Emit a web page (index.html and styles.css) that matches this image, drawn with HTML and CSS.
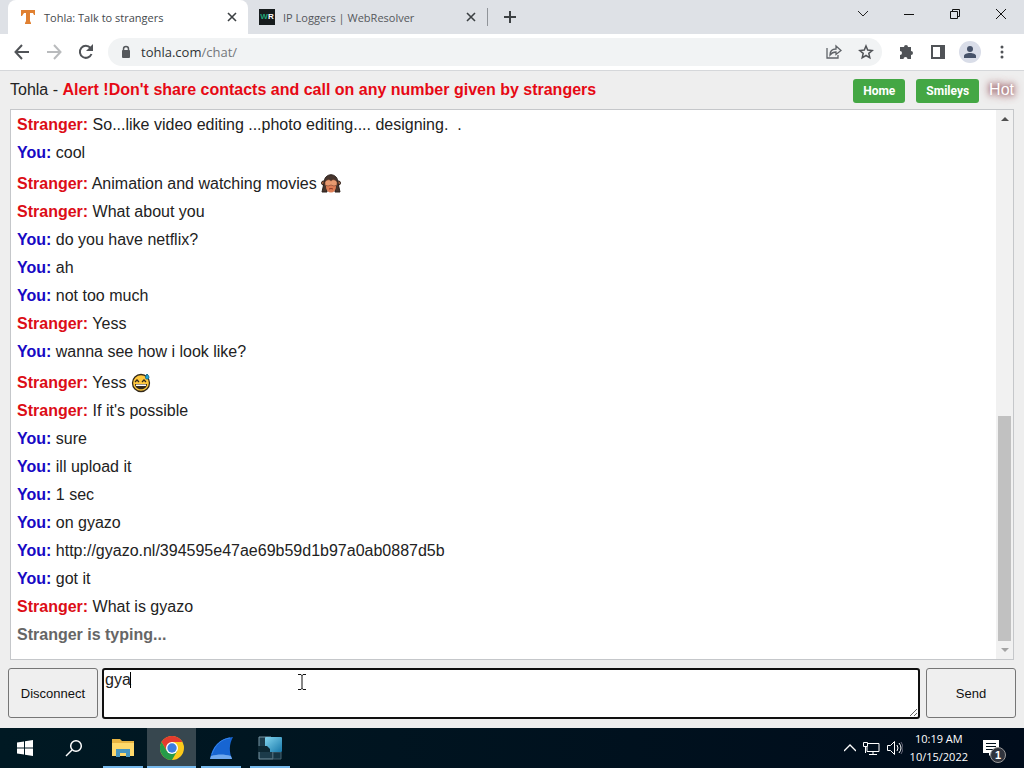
FILE: index.html
```html
<!DOCTYPE html>
<html lang="en">
<head>
    <meta charset="UTF-8">
    <meta name="viewport" content="width=device-width, initial-scale=1.0">
    <title>Tohla: Talk to strangers</title>
    <link rel="stylesheet" href="styles.css">
</head>
<body>
    <header class="tabs">
        <div class="tab active">
            <svg width="16" height="16" viewBox="0 0 16 16"><path d="M1 1h14v5h-1l-1-2h-3v8l1 2v1H5v-1l1-2V4H4L2 7H1z" fill="#e08031"/></svg>
            <span>Tohla: Talk to strangers</span>
            <button class="plain" aria-label="Close tab"><svg width="10" height="10" viewBox="0 0 10 10"><path d="M1 1l8 8M9 1L1 9" stroke="#3c4043" stroke-width="1.600"/></svg></button>
        </div>
        <div class="tab">
            <b class="wr"><i>W</i>R</b>
            <span>IP Loggers | WebResolver</span>
            <button class="plain" aria-label="Close tab"><svg width="10" height="10" viewBox="0 0 10 10"><path d="M1 1l8 8M9 1L1 9" stroke="#3c4043" stroke-width="1.600"/></svg></button>
        </div>
        <button class="plain new-tab" aria-label="New tab"><svg width="12" height="12" viewBox="0 0 12 12"><path d="M6 0v12M0 6h12" stroke="#3c4043" stroke-width="2"/></svg></button>
        <div class="window-buttons">
            <button class="plain" aria-label="Search tabs"><svg width="12" height="12" viewBox="0 0 12 12"><path d="M1 3l5 5 5-5" fill="none" stroke="#222"/></svg></button>
            <button class="plain" aria-label="Minimize"><svg width="12" height="12" viewBox="0 0 12 12"><path d="M1 6.500h10" stroke="#111"/></svg></button>
            <button class="plain" aria-label="Restore"><svg width="12" height="12" viewBox="0 0 12 12"><path d="M1.500 3.500h7v7h-7zM3.500 3V1.500h7v7H9" fill="none" stroke="#111"/></svg></button>
            <button class="plain" aria-label="Close"><svg width="12" height="12" viewBox="0 0 12 12"><path d="M1 1l10 10M11 1L1 11" stroke="#111"/></svg></button>
        </div>
    </header>

    <nav class="toolbar">
        <button class="plain" aria-label="Back"><svg width="16" height="16" viewBox="0 0 16 16"><path d="M15 8H2M8 1L1.500 8 8 15" fill="none" stroke="#505357" stroke-width="2"/></svg></button>
        <button class="plain" aria-label="Forward"><svg width="16" height="16" viewBox="0 0 16 16"><path d="M1 8h13M8 1l6.500 7L8 15" fill="none" stroke="#b9bbbd" stroke-width="2"/></svg></button>
        <button class="plain" aria-label="Reload"><svg width="16" height="16" viewBox="0 0 16 16"><path d="M13.500 10A6 6 0 1 1 12.500 4" fill="none" stroke="#505357" stroke-width="2"/><path d="M15 0v7H8z" fill="#505357"/></svg></button>
        <div class="address">
            <svg width="10" height="14" viewBox="0 0 10 14"><path d="M2.500 6V4a2.500 2.500 0 0 1 5 0v2" fill="none" stroke="#55585c" stroke-width="1.500"/><rect x="1" y="5" width="8" height="8" rx="1" fill="#55585c"/></svg>
            <span class="url">tohla.com<i>/chat/</i></span>
            <button class="plain" aria-label="Share"><svg width="16" height="16" viewBox="0 0 16 16"><path d="M1 4v10h11v-3M4 11c0-4 2-6 6-6V2l5 4.500-5 4V8C7 8 5.500 9 4 11z" fill="none" stroke="#5f6368" stroke-width="1.300"/></svg></button>
            <button class="plain" aria-label="Bookmark"><svg width="16" height="16" viewBox="0 0 16 16"><path d="M8 2l1.700 4.100 4.500.400-3.400 2.900 1 4.400L8 11.500l-3.800 2.300 1-4.400-3.400-2.900 4.500-.4z" fill="none" stroke="#505357" stroke-width="1.500"/></svg></button>
        </div>
        <div class="tools">
            <button class="plain" aria-label="Extensions"><svg width="16" height="16" viewBox="0 0 16 16"><path d="M2 3h4a2 2 0 0 1 4 0h3v4a2 2 0 0 1 0 4v4H9.500a2 2 0 0 0-4 0H2v-4a2 2 0 0 0 0-4z" fill="#505357"/></svg></button>
            <button class="plain" aria-label="Side panel"><svg width="16" height="16" viewBox="0 0 16 16"><path d="M2 2h12v12H2z" fill="none" stroke="#505357" stroke-width="2"/><path d="M10 2h4v12h-4z" fill="#505357"/></svg></button>
            <button class="plain" aria-label="Profile"><svg width="22" height="22" viewBox="0 0 22 22"><circle cx="11" cy="11" r="11" fill="#d9dde8"/><circle cx="11" cy="8" r="3" fill="#465269"/><path d="M5 17v-2c0-4 12-4 12 0v2z" fill="#465269"/></svg></button>
            <button class="plain" aria-label="Menu"><svg width="16" height="16" viewBox="0 0 16 16"><g fill="#505357"><circle cx="8" cy="3" r="1.500"/><circle cx="8" cy="8" r="1.500"/><circle cx="8" cy="13" r="1.500"/></g></svg></button>
        </div>
    </nav>

    <main>
        <div class="top">
            <div class="title">Tohla - <strong>Alert !Don't share contacts and call on any number given by strangers</strong></div>
            <a class="btn" href="#">Home</a>
            <a class="btn" href="#">Smileys</a>
            <a class="hot" href="#">Hot</a>
        </div>

        <section class="chat">
            <ul>
                <li><b class="stranger">Stranger:</b> So...like video editing ...photo editing.... designing.&nbsp; .</li>
                <li><b class="you">You:</b> cool</li>
                <li class="smiley"><b class="stranger">Stranger:</b> Animation and watching movies
                    <svg width="20" height="20" viewBox="0 0 20 20"><circle cx="2.500" cy="9" r="2" fill="#b06c48" stroke="#30211b"/><circle cx="17.500" cy="9" r="2" fill="#b06c48" stroke="#30211b"/><path d="M3 9C3-2 17-2 17 9l2 9h-5v-3H6v3H1z" fill="#46352d" stroke="#2b211d"/><ellipse cx="10" cy="13" rx="5" ry="5.500" fill="#de7d55"/><path d="M4 8q3-4 6-1q3-3 6 1v3q-3 2-6 0q-3 2-6 0z" fill="#e89a70" stroke="#7b4430" stroke-width=".6"/><path d="M8 15q2-1 4 0" stroke="#8f3925" fill="none"/></svg></li>
                <li><b class="stranger">Stranger:</b> What about you</li>
                <li><b class="you">You:</b> do you have netflix?</li>
                <li><b class="you">You:</b> ah</li>
                <li><b class="you">You:</b> not too much</li>
                <li><b class="stranger">Stranger:</b> Yess</li>
                <li><b class="you">You:</b> wanna see how i look like?</li>
                <li class="smiley"><b class="stranger">Stranger:</b> Yess
                    <svg width="20" height="20" viewBox="0 0 20 20"><circle cx="10" cy="10" r="8.500" fill="#ffc83d" stroke="#33291a" stroke-width="1.300"/><path d="M4 9l2-2 2 2M11 9l2-2 2 2" fill="none" stroke="#33291a" stroke-width="1.300"/><path d="M4 11h12c0 7-12 7-12 0z" fill="#33291a"/><path d="M5 11.500h10v1.500H5z" fill="#fff"/><path d="M16 1c-2 3-2 5 0 5s3-2 0-5z" fill="#22a7dc" stroke="#186b89"/></svg></li>
                <li><b class="stranger">Stranger:</b> If it's possible</li>
                <li><b class="you">You:</b> sure</li>
                <li><b class="you">You:</b> ill upload it</li>
                <li><b class="you">You:</b> 1 sec</li>
                <li><b class="you">You:</b> on gyazo</li>
                <li><b class="you">You:</b> http://gyazo.nl/394595e47ae69b59d1b97a0ab0887d5b</li>
                <li><b class="you">You:</b> got it</li>
                <li><b class="stranger">Stranger:</b> What is gyazo</li>
                <li><b class="typing">Stranger is typing...</b></li>
            </ul>
            <div class="scrollbar">
                <svg width="8" height="18" viewBox="0 0 8 18"><path d="M0 11l4-4 4 4z" fill="#505050"/></svg>
                <div class="space"></div>
                <div class="thumb"></div>
                <svg width="8" height="18" viewBox="0 0 8 18"><path d="M0 7l4 4 4-4z" fill="#a3a3a3"/></svg>
            </div>
        </section>

        <form class="compose" onsubmit="return false">
            <button type="button">Disconnect</button>
            <div class="field">
                <textarea id="message" aria-label="Message">gya</textarea>
                <span class="caret"></span>
                <svg class="pointer" width="8" height="16" viewBox="0 0 8 16"><path d="M0 .5h3l1 1 1-1h3M4 1v14M0 15.500h3l1-1 1 1h3" fill="none" stroke="#111"/></svg>
            </div>
            <button type="submit">Send</button>
        </form>
    </main>

    <footer class="taskbar">
        <button class="plain" aria-label="Start"><svg width="16" height="16" viewBox="0 0 16 16"><path d="M0 2.500l7-1v6H0zM8 1.300L16 0v7.500H8zM0 8.500h7v6l-7-1zM8 8.500h8V16l-8-1.200z" fill="#fff"/></svg></button>
        <button class="plain" aria-label="Search"><svg width="18" height="18" viewBox="0 0 18 18"><circle cx="11" cy="7" r="5.300" fill="none" stroke="#fff" stroke-width="1.500"/><path d="M7 11l-6 6" stroke="#fff" stroke-width="1.500"/></svg></button>
        <button class="plain open" aria-label="File Explorer"><svg width="22" height="20" viewBox="0 0 22 20"><path d="M0 1h8l2 2h12v15H0z" fill="#e8b442"/><path d="M0 5h22v13H0z" fill="#ffd96b"/><path d="M4 11h14v8h-4v-4H8v4H4z" fill="#4795bf"/></svg></button>
        <button class="plain open current" aria-label="Chrome"><svg width="24" height="24" viewBox="0 0 24 24"><circle cx="12" cy="12" r="12" fill="#fbc91b"/><path d="M1.600 6A12 12 0 0 1 22.400 6H12l-5.200 9z" fill="#e33b2e"/><path d="M1.600 6A12 12 0 0 0 12 24l5.200-9H6.800z" fill="#269b48"/><circle cx="12" cy="12" r="6" fill="#fff"/><circle cx="12" cy="12" r="4.700" fill="#3b7de0"/></svg></button>
        <button class="plain open" aria-label="Wireshark"><svg width="24" height="24" viewBox="0 0 24 24"><path d="M1 23C3 11 10 2 24 1c-4 7-4 15-1 22z" fill="#1765d2"/><path d="M1 23l1-3c7-2 13-2 20 0l1 3z" fill="#70a9ef"/><path d="M3 18C6 9 12 3 21 2" fill="none" stroke="#3585ed"/></svg></button>
        <button class="plain open" aria-label="Servers">
            <svg width="24" height="24" viewBox="0 0 24 24">
                <defs><linearGradient id="screen" x1="0" y1="0" x2="1" y2="1"><stop stop-color="#82d5ef"/><stop offset="1" stop-color="#1778aa"/></linearGradient></defs>
                <path d="M1 1h12v10H1zM1 13h14v10H1z" fill="#1c3b4a" stroke="#7795a3"/>
                <path d="M15 16h8v7h-8z" fill="#153544" stroke="#45616f"/>
                <rect x="7" y="1" width="17" height="15" rx="1" fill="url(#screen)"/>
                <path d="M0 10h9l3 3v3H0z" fill="#0d2732"/>
            </svg>
        </button>
        <div class="tray">
            <svg width="12" height="8" viewBox="0 0 12 8"><path d="M0 7l6-6 6 6" fill="none" stroke="#fff" stroke-width="1.300"/></svg>
            <svg width="17" height="14" viewBox="0 0 17 14"><path d="M4 2.500h12v8H4V6M10 11v2M6 13.500h8M.5 1.500h4v4h-4zM2.500 6v6" fill="none" stroke="#fff"/></svg>
            <svg width="16" height="14" viewBox="0 0 16 14"><path d="M.5 4.500h3l4-4v13l-4-4h-3zM10 4q2 3 0 6M12 2q4 5 0 10" fill="none" stroke="#fff"/><path d="M14 1q4 6 0 12" fill="none" stroke="#667"/></svg>
            <div class="clock">10:19 AM<br>10/15/2022</div>
            <div class="notice">
                <svg width="16" height="16" viewBox="0 0 16 16"><path d="M0 0h16v13H9l-3 3v-3H0z" fill="#fff"/><path d="M3 3.500h10M3 6.500h10M3 9.500h7" stroke="#00101c"/></svg>
                <span>1</span>
            </div>
        </div>
    </footer>
</body>
</html>
```

FILE: styles.css
```css
* {
    box-sizing: border-box;
}
body {
    margin: 0;
    min-height: 100vh;
    display: flex;
    flex-direction: column;
    font-family: "Liberation Sans", Arial, sans-serif;
    font-size: 16px;
    color: #222;
    background: #eee;
}
svg {
    display: block;
    flex: none;
}
i {
    font-style: normal;
}
.plain {
    display: flex;
    align-items: center;
    justify-content: center;
    flex: none;
    border: 0;
    padding: 0;
    background: none;
}

/* browser tabs */
.tabs {
    display: flex;
    height: 34px;
    padding-left: 8px;
    background: #dee1e6;
    font-family: "Open Sans", sans-serif;
    font-size: 11px;
}
.tab {
    display: flex;
    align-items: center;
    gap: 8px;
    width: 239px;
    padding: 0 11px;
    color: #55585c;
}
.tab span {
    flex: 1;
}
.tab.active {
    width: 240px;
    padding-left: 12px;
    background: #fff;
    border-radius: 8px 8px 0 0;
    color: #45494d;
}
.wr {
    width: 16px;
    background: #171c1d;
    color: #fff;
    font: bold 8px/16px "Liberation Sans", sans-serif;
    text-align: center;
}
.wr i {
    color: #20a576;
}
.new-tab {
    height: 18px;
    width: 44px;
    margin-top: 8px;
    border-left: 1px solid #909499;
}
.window-buttons {
    display: flex;
    margin-left: auto;
}
.window-buttons .plain {
    width: 46px;
    height: 28px;
}

/* address bar */
.toolbar {
    display: flex;
    align-items: center;
    height: 37px;
    padding-left: 6px;
    background: #fff;
    border-bottom: 1px solid #d5d7da;
}
.toolbar > .plain {
    width: 32px;
}
.address {
    display: flex;
    align-items: center;
    flex: 1;
    height: 28px;
    margin-left: 6px;
    padding: 0 0 0 13px;
    gap: 10px;
    background: #f1f3f4;
    border-radius: 14px;
}
.address .plain {
    width: 22px;
}
.address .plain:last-child {
    margin-right: 5px;
}
.url {
    flex: 1;
    font: 13px "Open Sans", sans-serif;
    color: #303336;
}
.url i {
    color: #74777b;
}
.tools {
    display: flex;
    padding-left: 8px;
    padding-right: 6px;
}
.tools .plain {
    width: 32px;
}

/* chat page */
main {
    display: flex;
    flex: 1;
    flex-direction: column;
}
.top {
    display: flex;
    height: 38px;
    align-items: center;
    padding: 0 10px;
}
.title {
    flex: 1;
}
.title strong {
    color: #e60914;
}
.btn {
    height: 24px;
    margin-top: 2px;
    margin-right: 11px;
    padding: 0 10px;
    border-radius: 3px;
    background: #44a744;
    color: #fff;
    font: bold 12px/24px Roboto, sans-serif;
    text-decoration: none;
}
.hot {
    margin-left: -1px;
    color: #fff;
    text-decoration: none;
    text-shadow: 0 0 5px #8b4c55, 0 0 9px #a2656a, 0 0 12px #b98489;
}
.chat {
    display: flex;
    flex: 1;
    margin: 0 10px;
    border: 1px solid #c5c7ca;
    background: #fff;
}
.chat ul {
    flex: 1;
    margin: 0;
    padding: 1px 6px 0;
    list-style: none;
}
.chat li {
    line-height: 28px;
}
.chat li.smiley {
    padding-top: 3px;
}
.chat li svg {
    display: inline-block;
    vertical-align: -5px;
}
.stranger {
    color: #dc0d17;
}
.you {
    color: #1708c4;
}
.typing {
    color: #666;
}
.scrollbar {
    display: flex;
    flex-direction: column;
    align-items: center;
    width: 17px;
    background: #f1f1f1;
}
.space {
    flex: 289;
}
.thumb {
    flex: 225;
    width: 13px;
    background: #c1c1c1;
}
.compose {
    display: flex;
    height: 68px;
    padding: 8px 8px 10px;
}
.compose button {
    width: 90px;
    border: 1px solid #767676;
    border-radius: 3px;
    background: #efefef;
    color: #111;
    font: 13px "Liberation Sans", sans-serif;
}
.field {
    position: relative;
    flex: 1;
    margin: 0 6px 0 4px;
}
.field textarea {
    display: block;
    width: 100%;
    height: 51px;
    padding: 1px;
    border: 2px solid #101010;
    border-radius: 3px;
    outline: 0;
    background: #fff;
    color: #222;
    font: 16px "Liberation Sans", sans-serif;
}
.caret {
    position: absolute;
    left: 28px;
    top: 4px;
    width: 1px;
    height: 16px;
    background: #000;
}
.pointer {
    position: absolute;
    left: 196px;
    top: 6px;
}

/* taskbar */
.taskbar {
    display: flex;
    height: 40px;
    background: linear-gradient(90deg, #001923, #000c1b);
    color: #fff;
}
.taskbar .plain {
    width: 49px;
}
.taskbar .open {
    background: linear-gradient(#76b9ed, #76b9ed) center bottom / 40px 2px no-repeat;
}
.taskbar .current {
    background: linear-gradient(#76b9ed, #76b9ed) center bottom / 100% 2px no-repeat #37474f;
}
.tray {
    display: flex;
    align-items: center;
    gap: 7px;
    margin-left: auto;
    padding-right: 25px;
}
.clock {
    font: 11px/18px "Open Sans", sans-serif;
    text-align: center;
}
.notice {
    position: relative;
    margin-left: 8px;
}
.notice span {
    position: absolute;
    left: 7px;
    top: 7px;
    width: 16px;
    height: 16px;
    border: 1px solid #999;
    border-radius: 8px;
    background: #30343d;
    font: bold 11px/14px "Liberation Sans", sans-serif;
    text-align: center;
}
```
